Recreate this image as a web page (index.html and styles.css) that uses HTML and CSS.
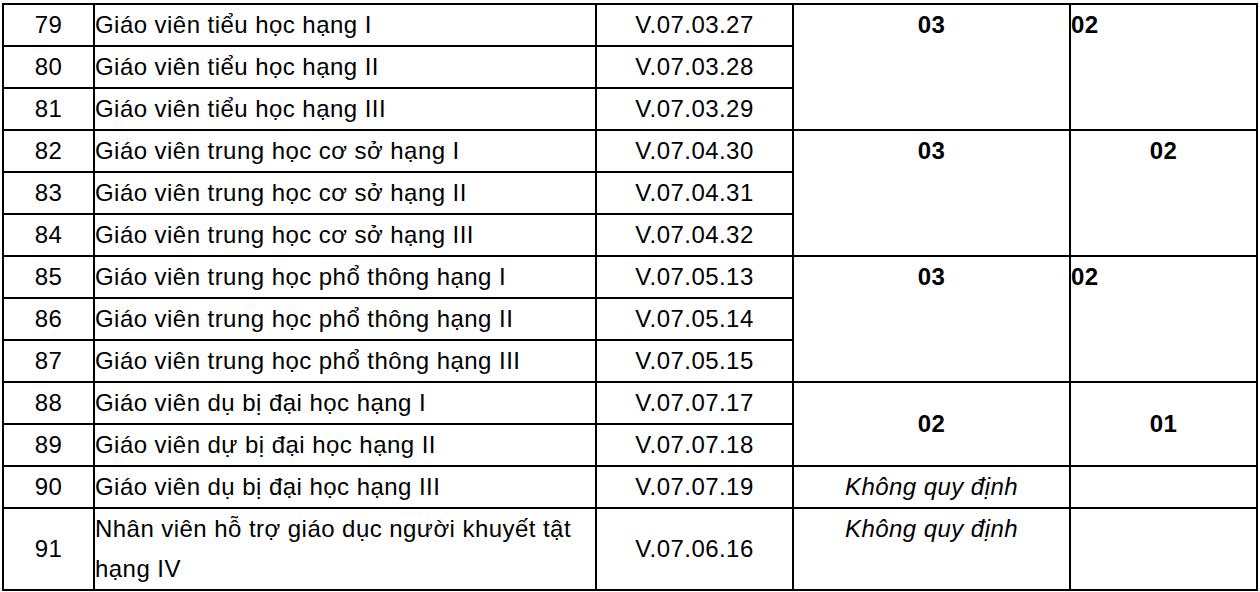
FILE: index.html
```html
<!DOCTYPE html>
<html lang="vi">
<head>
<meta charset="utf-8">
<title>Bảng</title>
<link rel="stylesheet" href="styles.css">
</head>
<body>
<table class="grid">
  <colgroup>
    <col class="c-num">
    <col class="c-name">
    <col class="c-code">
    <col class="c-a">
    <col class="c-b">
  </colgroup>
  <tbody>
    <tr>
      <td class="num">79</td>
      <td class="name">Giáo viên tiểu học hạng I</td>
      <td class="code">V.07.03.27</td>
      <td class="val top center" rowspan="3">03</td>
      <td class="val top left" rowspan="3">02</td>
    </tr>
    <tr>
      <td class="num">80</td>
      <td class="name">Giáo viên tiểu học hạng II</td>
      <td class="code">V.07.03.28</td>
    </tr>
    <tr>
      <td class="num">81</td>
      <td class="name">Giáo viên tiểu học hạng III</td>
      <td class="code">V.07.03.29</td>
    </tr>
    <tr>
      <td class="num">82</td>
      <td class="name">Giáo viên trung học cơ sở hạng I</td>
      <td class="code">V.07.04.30</td>
      <td class="val top center" rowspan="3">03</td>
      <td class="val top center" rowspan="3">02</td>
    </tr>
    <tr>
      <td class="num">83</td>
      <td class="name">Giáo viên trung học cơ sở hạng II</td>
      <td class="code">V.07.04.31</td>
    </tr>
    <tr>
      <td class="num">84</td>
      <td class="name">Giáo viên trung học cơ sở hạng III</td>
      <td class="code">V.07.04.32</td>
    </tr>
    <tr>
      <td class="num">85</td>
      <td class="name">Giáo viên trung học phổ thông hạng I</td>
      <td class="code">V.07.05.13</td>
      <td class="val top center" rowspan="3">03</td>
      <td class="val top left" rowspan="3">02</td>
    </tr>
    <tr>
      <td class="num">86</td>
      <td class="name">Giáo viên trung học phổ thông hạng II</td>
      <td class="code">V.07.05.14</td>
    </tr>
    <tr>
      <td class="num">87</td>
      <td class="name">Giáo viên trung học phổ thông hạng III</td>
      <td class="code">V.07.05.15</td>
    </tr>
    <tr>
      <td class="num">88</td>
      <td class="name">Giáo viên dụ bị đại học hạng I</td>
      <td class="code">V.07.07.17</td>
      <td class="val center" rowspan="2">02</td>
      <td class="val center" rowspan="2">01</td>
    </tr>
    <tr>
      <td class="num">89</td>
      <td class="name">Giáo viên dự bị đại học hạng II</td>
      <td class="code">V.07.07.18</td>
    </tr>
    <tr>
      <td class="num">90</td>
      <td class="name">Giáo viên dụ bị đại học hạng III</td>
      <td class="code">V.07.07.19</td>
      <td class="note">Không quy định</td>
      <td></td>
    </tr>
    <tr>
      <td class="num">91</td>
      <td class="name">Nhân viên hỗ trợ giáo dục người khuyết tật hạng IV</td>
      <td class="code">V.07.06.16</td>
      <td class="note top">Không quy định</td>
      <td></td>
    </tr>
  </tbody>
</table>
</body>
</html>
```

FILE: styles.css
```css
html, body {
  margin: 0;
  padding: 0;
  background: #ffffff;
}

body {
  padding: 3px 0 0 2px;
  font-family: "Liberation Sans", Arial, sans-serif;
  font-size: 24px;
  letter-spacing: 0.45px;
  color: #000000;
}

.grid {
  border-collapse: collapse;
  table-layout: fixed;
  width: 1256px;
  border: 2px solid #000;
}

.c-num { width: 91px; }
.c-name { width: 502px; }
.c-code { width: 197px; }
.c-a { width: 277px; }
.c-b { width: 187px; }

.grid td {
  border: 2px solid #000;
  padding: 0;
  height: 40px;
  line-height: 40px;
  vertical-align: middle;
}

.num,
.code {
  text-align: center;
}

.name {
  text-align: left;
  padding-left: 1px;
}

.val {
  font-weight: bold;
}

.grid td.top {
  vertical-align: top;
}

.center { text-align: center; }
.left { text-align: left; }

.note {
  font-style: italic;
  text-align: center;
}
```
